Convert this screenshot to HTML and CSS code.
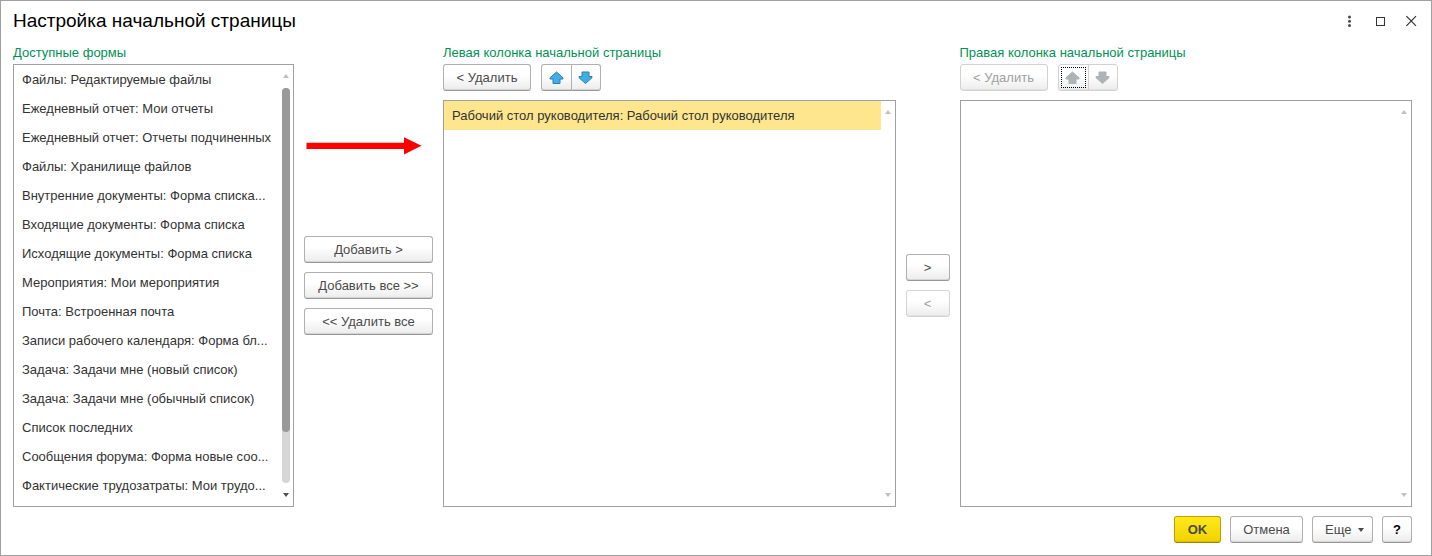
FILE: index.html
```html
<!DOCTYPE html>
<html lang="ru">
<head>
    <meta charset="UTF-8">
    <meta name="viewport" content="width=device-width, initial-scale=1.0">
    <title>Настройка начальной страницы</title>
    <link rel="stylesheet" href="styles.css">
</head>
<body>
    <div class="window">
        <header class="titlebar">
            <h1 class="title">Настройка начальной страницы</h1>
            <div class="window-controls">
                <button class="control" type="button" aria-label="Меню">
                    <svg width="15" height="15" viewBox="0 0 15 15" fill="#4a4a4a"><circle cx="7.5" cy="3" r="1.5"/><circle cx="7.5" cy="7.2" r="1.5"/><circle cx="7.5" cy="11.4" r="1.5"/></svg>
                </button>
                <button class="control" type="button" aria-label="Развернуть">
                    <svg width="15" height="15" viewBox="0 0 15 15" fill="none" stroke="#333"><rect x="3.5" y="3.5" width="8" height="8"/></svg>
                </button>
                <button class="control" type="button" aria-label="Закрыть">
                    <svg width="15" height="15" viewBox="0 0 15 15" fill="none" stroke="#333" stroke-width="1.2"><path d="M2.4 2.2l9.6 9.6M12 2.2l-9.6 9.6"/></svg>
                </button>
            </div>
        </header>

        <main class="columns">
            <h2 class="caption caption-forms" id="formsCaption">Доступные формы</h2>
            <h2 class="caption caption-left" id="leftCaption">Левая колонка начальной страницы</h2>
            <h2 class="caption caption-right" id="rightCaption">Правая колонка начальной страницы</h2>

            <div class="panel panel-forms">
                <div class="list">
                    <ul class="items" aria-labelledby="formsCaption">
                        <li class="item">Файлы: Редактируемые файлы</li>
                        <li class="item">Ежедневный отчет: Мои отчеты</li>
                        <li class="item">Ежедневный отчет: Отчеты подчиненных</li>
                        <li class="item">Файлы: Хранилище файлов</li>
                        <li class="item">Внутренние документы: Форма списка...</li>
                        <li class="item">Входящие документы: Форма списка</li>
                        <li class="item">Исходящие документы: Форма списка</li>
                        <li class="item">Мероприятия: Мои мероприятия</li>
                        <li class="item">Почта: Встроенная почта</li>
                        <li class="item">Записи рабочего календаря: Форма бл...</li>
                        <li class="item">Задача: Задачи мне (новый список)</li>
                        <li class="item">Задача: Задачи мне (обычный список)</li>
                        <li class="item">Список последних</li>
                        <li class="item">Сообщения форума: Форма новые соо...</li>
                        <li class="item">Фактические трудозатраты: Мои трудо...</li>
                    </ul>
                    <div class="scrollbar">
                        <span class="scroll-up"></span>
                        <span class="scroll-track"><span class="scroll-thumb"></span></span>
                        <span class="scroll-down active"></span>
                    </div>
                </div>
            </div>

            <div class="actions actions-add">
                <svg class="red-arrow" width="116" height="18" viewBox="0 0 116 18" fill="#f00"><path d="M0.5 5.7h97.5V0.2l17.5 8.6-17.5 8.6v-5.4H0.5z"/></svg>
                <button class="btn" type="button">Добавить &gt;</button>
                <button class="btn" type="button">Добавить все &gt;&gt;</button>
                <button class="btn" type="button">&lt;&lt; Удалить все</button>
            </div>

            <div class="panel panel-left">
                <div class="toolbar">
                    <button class="btn btn-remove" type="button">&lt; Удалить</button>
                    <div class="btn-group">
                        <button class="btn btn-icon" type="button" aria-label="Вверх">
                            <svg width="16" height="14" viewBox="0 0 16 14"><path class="arrow-icon" d="M7.5 1L14 6.8V8H11V12.5H4V8H1V6.8z"/></svg>
                        </button>
                        <button class="btn btn-icon" type="button" aria-label="Вниз">
                            <svg width="16" height="14" viewBox="0 0 16 14"><path class="arrow-icon" d="M7.5 12.5L14 6.7V5.5H11V1H4V5.5H1V6.7z"/></svg>
                        </button>
                    </div>
                </div>
                <div class="list">
                    <ul class="items" aria-labelledby="leftCaption">
                        <li class="item selected">Рабочий стол руководителя: Рабочий стол руководителя</li>
                    </ul>
                    <div class="scrollbar">
                        <span class="scroll-up"></span>
                        <span class="scroll-down"></span>
                    </div>
                </div>
            </div>

            <div class="actions actions-move">
                <button class="btn" type="button">&gt;</button>
                <button class="btn" type="button" disabled>&lt;</button>
            </div>

            <div class="panel panel-right">
                <div class="toolbar">
                    <button class="btn btn-remove" type="button" disabled>&lt; Удалить</button>
                    <div class="btn-group">
                        <button class="btn btn-icon focused" type="button" aria-label="Вверх" disabled>
                            <svg width="16" height="14" viewBox="0 0 16 14"><path class="arrow-icon" d="M7.5 1L14 6.8V8H11V12.5H4V8H1V6.8z"/></svg>
                        </button>
                        <button class="btn btn-icon" type="button" aria-label="Вниз" disabled>
                            <svg width="16" height="14" viewBox="0 0 16 14"><path class="arrow-icon" d="M7.5 12.5L14 6.7V5.5H11V1H4V5.5H1V6.7z"/></svg>
                        </button>
                    </div>
                </div>
                <div class="list">
                    <ul class="items" aria-labelledby="rightCaption"></ul>
                    <div class="scrollbar">
                        <span class="scroll-up"></span>
                        <span class="scroll-down"></span>
                    </div>
                </div>
            </div>
        </main>

        <footer class="footer">
            <button class="btn btn-ok" type="button">OK</button>
            <button class="btn btn-cancel" type="button">Отмена</button>
            <button class="btn btn-more" type="button">Еще <span class="caret"></span></button>
            <button class="btn btn-help" type="button">?</button>
        </footer>
    </div>
</body>
</html>
```
FILE: styles.css
```css
* {
    box-sizing: border-box;
}

body {
    margin: 0;
    background: #fff;
    color: #333;
    font: 13px/16px "Liberation Sans", Arial, sans-serif;
}

.window {
    display: flex;
    flex-direction: column;
    min-height: 100vh;
    padding: 8px 19px 12px 12px;
    border: 1px solid #a0a0a0;
}

.titlebar {
    display: flex;
    align-items: center;
    justify-content: space-between;
    height: 24px;
    margin-bottom: 12px;
}

.title {
    margin: 0;
    color: #000;
    font-size: 19px;
    font-weight: normal;
    line-height: 24px;
}

.window-controls {
    display: flex;
    gap: 16px;
    margin-right: -7px;
}

.control {
    display: flex;
    padding: 0;
    border: none;
    background: none;
}

.columns {
    display: grid;
    flex: 1;
    grid-template-columns: 281px 129px minmax(0, 1fr) 44px minmax(0, 1fr);
    grid-template-rows: 19px 1fr;
    column-gap: 10px;
}

.caption {
    margin: 0;
    color: #009255;
    font-size: 13px;
    font-weight: normal;
    line-height: 16px;
}

.caption-forms {
    grid-column: 1;
}

.caption-left {
    grid-column: 3;
}

.caption-right {
    grid-column: 5;
}

.panel,
.actions {
    display: flex;
    flex-direction: column;
    grid-row: 2;
    gap: 9px;
}

.panel-forms {
    grid-column: 1;
}

.actions-add {
    position: relative;
    grid-column: 2;
}

.panel-left {
    grid-column: 3;
}

.actions-move {
    grid-column: 4;
}

.panel-right {
    grid-column: 5;
}

.actions {
    justify-content: center;
}

.red-arrow {
    position: absolute;
    top: 73px;
    left: 2px;
}

.toolbar {
    display: flex;
    gap: 10px;
}

.list {
    display: flex;
    flex: 1;
    border: 1px solid #a0a0a0;
}

.items {
    flex: 1;
    min-width: 0;
    margin: 0;
    padding: 0;
    list-style: none;
}

.item {
    overflow: hidden;
    height: 29px;
    padding-left: 8px;
    line-height: 29px;
    white-space: nowrap;
}

.selected {
    background: #fde68e;
}

.scrollbar {
    display: flex;
    flex-direction: column;
    align-items: center;
    justify-content: space-between;
    width: 14px;
    padding: 9px 0;
}

.scroll-up,
.scroll-down,
.caret {
    border: 3px solid transparent;
}

.scroll-up {
    border-top: none;
    border-bottom: 4px solid #c0c0c0;
}

.scroll-down {
    border-top: 4px solid #c0c0c0;
    border-bottom: none;
}

.scroll-down.active {
    border-top-color: #505050;
}

.scroll-track {
    flex: 1;
    width: 8px;
    margin: 10px 0;
    border-radius: 4px;
    background: #d6d6d6;
}

.scroll-thumb {
    display: block;
    height: 87%;
    border-radius: 4px;
    background: #999;
}

.btn {
    height: 27px;
    padding: 1px 12px 0;
    border: 1px solid #b0b0b0;
    border-bottom-color: #989898;
    border-radius: 3px;
    background: linear-gradient(#fff 40%, #ececec);
    box-shadow: inset 0 -1px #d4d4d4;
    color: #4a4a4a;
    font: inherit;
    white-space: nowrap;
}

.btn:disabled {
    border-color: #d2d2d2;
    box-shadow: inset 0 -1px #e2e2e2;
    color: #a0a0a0;
}

.btn-remove {
    width: 88px;
}

.btn-group {
    display: flex;
}

.btn-icon {
    display: flex;
    align-items: center;
    justify-content: center;
    width: 31px;
    padding: 0;
}

.btn-icon:first-child {
    border-radius: 3px 0 0 3px;
}

.btn-icon:last-child {
    width: 30px;
    margin-left: -1px;
    border-radius: 0 3px 3px 0;
}

.btn-icon.focused {
    outline: 1px dotted #000;
    outline-offset: -4px;
}

.arrow-icon {
    fill: #42aee6;
    stroke: #2c7fae;
    stroke-linejoin: round;
}

.btn:disabled .arrow-icon {
    fill: #adb3b6;
    stroke: #adb3b6;
}

.footer {
    display: flex;
    justify-content: flex-end;
    gap: 9px;
    margin-top: 9px;
}

.btn-ok {
    width: 47px;
    border-color: #c0a000;
    border-bottom-color: #a08800;
    background: linear-gradient(#ffe91a, #f2d200);
    box-shadow: inset 0 -1px #d8ba00;
    font-weight: bold;
}

.btn-cancel {
    width: 73px;
}

.btn-more {
    display: flex;
    align-items: center;
    gap: 7px;
    width: 61px;
    padding-right: 6px;
}

.caret {
    border-top: 4px solid #4a4a4a;
    border-bottom: none;
}

.btn-help {
    width: 30px;
    padding-right: 0;
    padding-left: 0;
    color: #000;
    font-weight: bold;
}
```
